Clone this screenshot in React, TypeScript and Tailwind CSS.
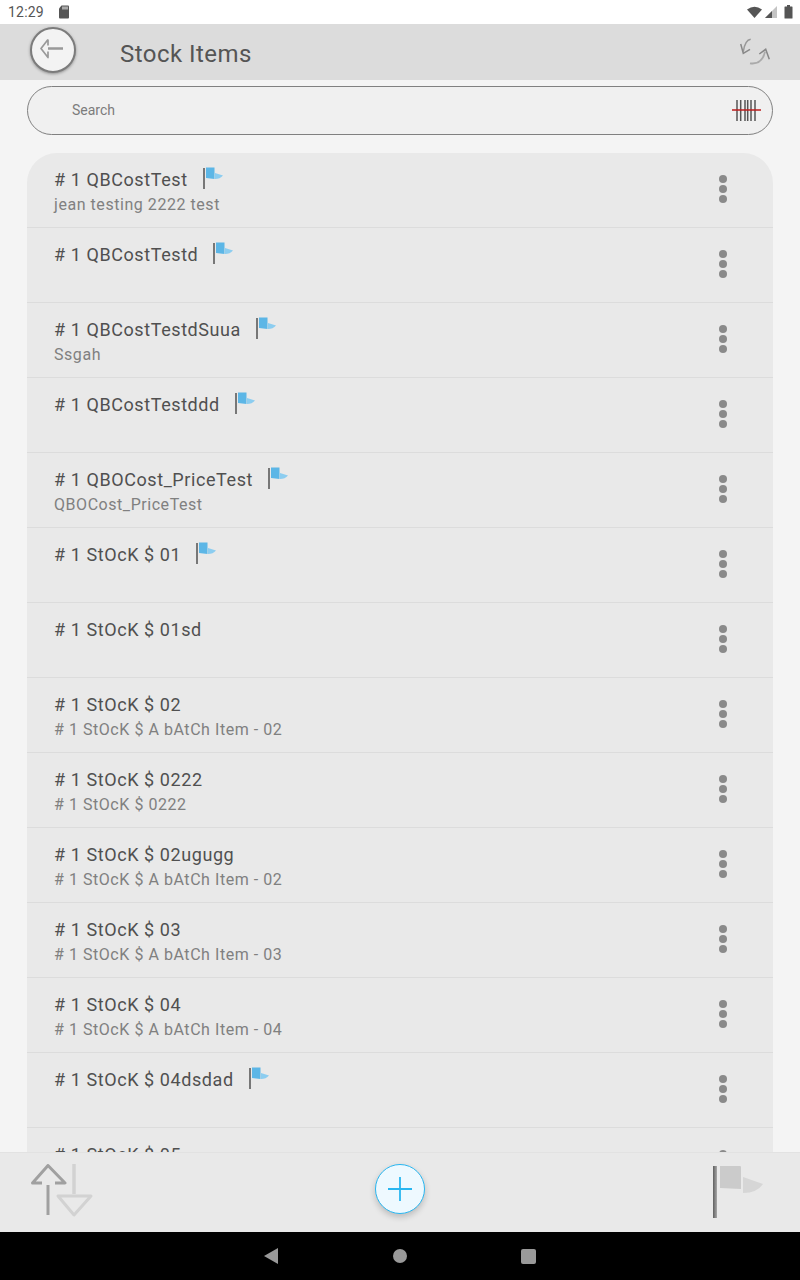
const items = [
  { title: '# 1 QBCostTest', sub: 'jean testing 2222 test', flag: true },
  { title: '# 1 QBCostTestd', sub: '', flag: true },
  { title: '# 1 QBCostTestdSuua', sub: 'Ssgah', flag: true },
  { title: '# 1 QBCostTestddd', sub: '', flag: true },
  { title: '# 1 QBOCost_PriceTest', sub: 'QBOCost_PriceTest', flag: true },
  { title: '# 1 StOcK $ 01', sub: '', flag: true },
  { title: '# 1 StOcK $ 01sd', sub: '', flag: false },
  { title: '# 1 StOcK $ 02', sub: '# 1 StOcK $ A bAtCh Item - 02', flag: false },
  { title: '# 1 StOcK $ 0222', sub: '# 1 StOcK $ 0222', flag: false },
  { title: '# 1 StOcK $ 02ugugg', sub: '# 1 StOcK $ A bAtCh Item - 02', flag: false },
  { title: '# 1 StOcK $ 03', sub: '# 1 StOcK $ A bAtCh Item - 03', flag: false },
  { title: '# 1 StOcK $ 04', sub: '# 1 StOcK $ A bAtCh Item - 04', flag: false },
  { title: '# 1 StOcK $ 04dsdad', sub: '', flag: true },
  { title: '# 1 StOcK $ 05', sub: '', flag: false },
];

const Flag = () => (
  <svg width="22" height="22" viewBox="0 0 22 22" className="ml-[15px] shrink-0">
    <rect x="0" y="1" width="2" height="21" fill="#777" />
    <path d="M3 0.5 H11.5 V12 L3 11 Z" fill="#5cb6e6" />
    <path d="M12 6 L20 8.5 Q17 12 12 12 Z" fill="#8ccdf0" />
  </svg>
);

const Dots = () => (
  <div className="flex flex-col items-center gap-[2px]">
    <div className="w-2 h-2 rounded-full bg-[#8a8a8a]" />
    <div className="w-2 h-2 rounded-full bg-[#8a8a8a]" />
    <div className="w-2 h-2 rounded-full bg-[#8a8a8a]" />
  </div>
);

const Row = ({ title, sub, flag }: { title: string; sub: string; flag: boolean }) => (
  <div className="h-[75px] shrink-0 border-b border-[#dcdcdc] flex justify-between pl-[27px] pr-[46px]">
    <div className="pt-[14px]">
      <div className="flex items-start h-[25px] text-[18px] leading-[25px] tracking-[0.58px] text-[#505050]">
        <span>{title}</span>
        {flag && <Flag />}
      </div>
      <div className="mt-[1px] text-[16px] leading-[24px] tracking-[0.55px] text-[#808080]">{sub}</div>
    </div>
    <div className="pt-[22px]">
      <Dots />
    </div>
  </div>
);

export default function App() {
  return (
    <div className="w-[800px] h-[1280px] overflow-hidden flex flex-col bg-[#f4f4f4] font-['Roboto',sans-serif]">
      {/* status bar */}
      <div className="h-[24px] shrink-0 bg-white flex items-center justify-between pl-2 pr-[7px] text-[#555]">
        <div className="flex items-center gap-[14px]">
          <span className="text-[14px] leading-[24px] tracking-[0.2px]">12:29</span>
          <svg width="12" height="14" viewBox="0 0 12 14">
            <path d="M3.5 0.5 H10 Q11 0.5 11 1.5 V12.5 Q11 13.5 10 13.5 H2 Q1 13.5 1 12.5 V3.5 Z" fill="#555" />
            <path d="M5 1.5 V4.5 M7 1.5 V4.5 M9 1.5 V4.5" stroke="#fff" strokeWidth="1" />
          </svg>
        </div>
        <div className="flex items-center">
          <svg width="15" height="12" viewBox="0 0 15 12">
            <path d="M0 3.5 Q7.5 -2 15 3.5 L7.5 12 Z" fill="#555" />
          </svg>
          <svg width="12" height="12" viewBox="0 0 12 12" className="ml-[3px]">
            <path d="M0 12 L12 0 V12 Z" fill="#c4c4c4" />
            <path d="M7 5 V12 H0 Z" fill="#555" />
          </svg>
          <svg width="9" height="14" viewBox="0 0 9 14" className="ml-[7px]">
            <path d="M3 0 H6 V1.5 H8 Q8.5 1.5 8.5 2 V13 Q8.5 13.5 8 13.5 H1 Q0.5 13.5 0.5 13 V2 Q0.5 1.5 1 1.5 H3 Z" fill="#555" />
          </svg>
        </div>
      </div>

      {/* header */}
      <div className="h-[56px] shrink-0 bg-[#dcdcdc] flex items-center justify-between pl-[30px] pr-[28px]">
        <div className="flex items-center">
          <div className="w-[46px] h-[46px] rounded-full bg-[#f3f3f3] border-2 border-[#7c7c7c] shadow-[0_1px_3px_rgba(0,0,0,0.35)] flex items-center justify-center mt-[-5px]">
            <svg width="26" height="24" viewBox="0 0 26 24" fill="none">
              <path d="M8 1.5 L1 10.5 L8 19.5 V13.5 M8 1.5 V7.5" stroke="#999" strokeWidth="1.7" strokeLinejoin="round" />
              <path d="M8 10.5 H23" stroke="#999" strokeWidth="2.5" />
            </svg>
          </div>
          <span className="ml-[44px] text-[24px] leading-[32px] tracking-[0.45px] text-[#555] mt-[3px]">Stock Items</span>
        </div>
        <svg width="32" height="30" viewBox="0 0 32 30" fill="none" className="mt-[-1px]">
          <path d="M10.7 2.3 Q5 3 3.3 14.7" stroke="#999" strokeWidth="1.5" />
          <path d="M0.7 7 L3.3 16.3 L10 12.3" stroke="#888" strokeWidth="1.5" />
          <path d="M10 26.3 Q22 28 25 14.7" stroke="#aaa" strokeWidth="1.8" />
          <path d="M19.3 17 L25.7 12.3 L29.3 22.3" stroke="#888" strokeWidth="1.5" />
        </svg>
      </div>

      {/* search */}
      <div className="shrink-0 px-[27px] pt-[6px]">
        <div className="h-[49px] rounded-full bg-[#f0f0f0] border border-[#808080] flex items-center justify-between pl-[44px] pr-[10px]">
          <span className="text-[14px] text-[#7c7c7c]">Search</span>
          <svg width="30" height="21" viewBox="0 0 30 21" className="mt-[-1px]">
            <path d="M5 0 V21 M8.7 0 V21 M13 0 V21 M15.7 0 V21 M19 0 V21 M23 0 V21" stroke="#555" strokeWidth="1.5" />
            <path d="M0 10 H29" stroke="#bb1c1c" strokeWidth="1.5" />
          </svg>
        </div>
      </div>

      {/* list */}
      <div className="flex-1 min-h-0 overflow-hidden px-[27px] pt-[18px]">
        <div className="bg-[#e9e9e9] rounded-t-[30px] flex flex-col">
          {items.map((item) => (
            <Row key={item.title} {...item} />
          ))}
        </div>
      </div>

      {/* footer */}
      <div className="h-[80px] shrink-0 bg-[#e9e9e9] border-t border-[#e2e2e2] flex items-center justify-between pl-[30px] pr-[35px]">
        <svg width="64" height="54" viewBox="0 0 64 54" fill="none" className="mt-[-4px]">
          <path d="M12 19 H2.5 L18 1.5 L35 19 H25" stroke="#a0a0a0" strokeWidth="3" strokeLinejoin="round" />
          <path d="M18 21 V51" stroke="#a0a0a0" strokeWidth="3" />
          <path d="M44 0 V30" stroke="#d2d2d2" strokeWidth="3.5" />
          <path d="M28 32 H61 L44 51 Z" stroke="#d2d2d2" strokeWidth="3" strokeLinejoin="round" />
        </svg>
        <div className="w-[50px] h-[50px] rounded-full bg-[#eef9ff] border border-[#29b6f0] shadow-[0_3px_6px_rgba(0,0,0,0.2)] flex items-center justify-center mt-[-8px] mr-[8px]">
          <svg width="24" height="24" viewBox="0 0 24 24">
            <path d="M0 12 H24 M12 0 V24" stroke="#29b6f0" strokeWidth="1.8" />
          </svg>
        </div>
        <svg width="52" height="54" viewBox="0 0 52 54" className="mt-[-1px]">
          <defs>
            <linearGradient id="pole" x1="0" x2="1" y1="0" y2="0">
              <stop offset="0" stopColor="#5f5f5f" />
              <stop offset="1" stopColor="#a8a8a8" />
            </linearGradient>
          </defs>
          <rect x="0" y="1" width="4" height="52" fill="url(#pole)" />
          <path d="M7 1 H27 Q28 1 28 2 V24 L7 23 Z" fill="#cbcbcb" />
          <path d="M30 12 L50 19 Q44 28 30 28 Z" fill="#d6d6d6" />
        </svg>
      </div>

      {/* nav */}
      <div className="h-[48px] shrink-0 bg-black flex items-center justify-center gap-[114px]">
        <svg width="16" height="18" viewBox="0 0 16 18" className="ml-[-2px]"><path d="M15 1 V17 L1 9 Z" fill="#999" /></svg>
        <div className="w-[14px] h-[14px] rounded-full bg-[#999]" />
        <div className="w-[15px] h-[15px] rounded-[2px] bg-[#999]" />
      </div>
    </div>
  );
}
